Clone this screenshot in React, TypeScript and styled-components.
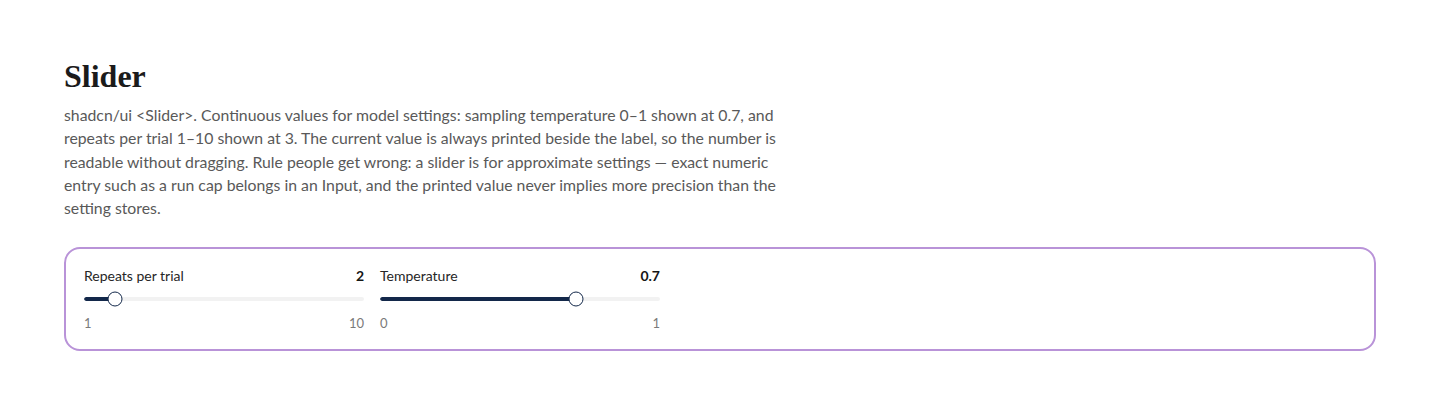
import { styled, createGlobalStyle } from 'styled-components'

const GlobalStyle = createGlobalStyle`
  * { box-sizing: border-box; }
  body {
    margin: 0;
    background: #ffffff;
    font-family: Lato, "Noto Sans", sans-serif;
    color: #1f1f1f;
  }
`

interface SliderSetting {
  label: string
  min: number
  max: number
  value: number
  display: string
}

const settings: SliderSetting[] = [
  { label: 'Repeats per trial', min: 1, max: 10, value: 2, display: '2' },
  { label: 'Temperature', min: 0, max: 1, value: 0.7, display: '0.7' },
]

function SettingSlider({ label, min, max, value, display }: SliderSetting) {
  const pct = ((value - min) / (max - min)) * 100
  return (
    <Field>
      <LabelRow>
        <Label>{label}</Label>
        <Value>{display}</Value>
      </LabelRow>
      <Root>
        <Track>
          <Range style={{ width: `${pct}%` }} />
        </Track>
        <Thumb style={{ left: `${pct}%` }} />
      </Root>
      <Bounds>
        <span>{min}</span>
        <span>{max}</span>
      </Bounds>
    </Field>
  )
}

export default function App() {
  return (
    <>
      <GlobalStyle />
      <Page>
        <Title>Slider</Title>
        <Description>
          shadcn/ui &lt;Slider&gt;. Continuous values for model settings: sampling temperature 0–1 shown at 0.7, and
          repeats per trial 1–10 shown at 3. The current value is always printed beside the label, so the number is
          readable without dragging. Rule people get wrong: a slider is for approximate settings — exact numeric entry
          such as a run cap belongs in an Input, and the printed value never implies more precision than the setting
          stores.
        </Description>
        <Card>
          {settings.map((s) => (
            <SettingSlider key={s.label} {...s} />
          ))}
        </Card>
      </Page>
    </>
  )
}

// ============ styles ============

const Page = styled.main`
  padding: 56px 64px 40px;
`

const Title = styled.h1`
  margin: 0 0 7px;
  font-family: "Liberation Serif", "DejaVu Serif", serif;
  font-weight: 700;
  font-size: 32px;
  line-height: 40px;
  color: #1b1b1b;
`

const Description = styled.p`
  margin: 0 0 28px;
  max-width: 716px;
  font-size: 15.8px;
  line-height: 23.3px;
  color: #595959;
`

const Card = styled.section`
  display: flex;
  gap: 16px;
  padding: 18px 18px 17px;
  border: 2px solid #b993d8;
  border-radius: 16px;
`

const Field = styled.div`
  width: 280px;
  display: flex;
  flex-direction: column;
`

const LabelRow = styled.div`
  display: flex;
  justify-content: space-between;
  align-items: baseline;
  margin-bottom: 6px;
  font-size: 14px;
  line-height: 18px;
  color: #262626;
`

const Label = styled.span`
  font-weight: 400;
`

const Value = styled.span`
  font-weight: 700;
  color: #161616;
`

const Root = styled.div`
  position: relative;
  height: 16px;
  margin-bottom: 7px;
  display: flex;
  align-items: center;
`

const Track = styled.div`
  position: relative;
  width: 100%;
  height: 4px;
  border-radius: 9999px;
  background: #f2f2f2;
  overflow: hidden;
`

const Range = styled.div`
  height: 100%;
  background: #13284a;
  border-radius: 9999px;
`

const Thumb = styled.span`
  position: absolute;
  top: 50%;
  width: 15px;
  height: 15px;
  border-radius: 50%;
  background: #ffffff;
  border: 1.5px solid #13284a;
  transform: translate(-50%, -50%);
`

const Bounds = styled.div`
  display: flex;
  justify-content: space-between;
  font-size: 13px;
  line-height: 18px;
  color: #7a7a7a;
`
